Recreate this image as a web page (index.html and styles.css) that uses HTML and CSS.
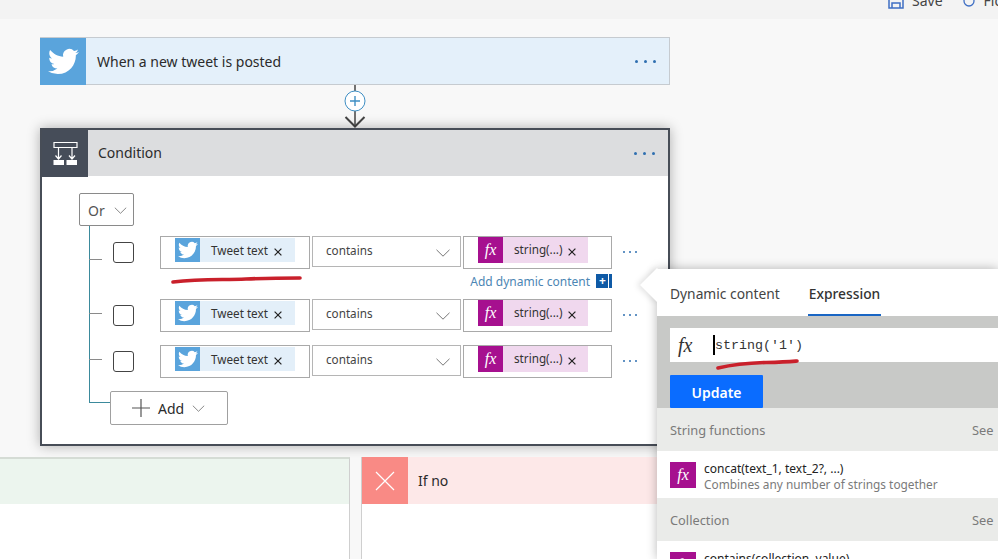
FILE: index.html
```html
<!DOCTYPE html>
<html lang="en">
<head>
<meta charset="UTF-8" />
<meta name="viewport" content="width=device-width, initial-scale=1.0"/>
<title>Flow designer</title>
<link rel="stylesheet" href="styles.css">
</head>
<body>

<svg class="defs" width="0" height="0">
  <symbol id="bird" viewBox="0 0 24 24">
    <path fill="#fff" d="M23.953 4.57a10 10 0 01-2.825.775 4.958 4.958 0 002.163-2.723c-.951.555-2.005.959-3.127 1.184a4.92 4.92 0 00-8.384 4.482C7.69 8.095 4.067 6.13 1.64 3.162a4.822 4.822 0 00-.666 2.475c0 1.71.87 3.213 2.188 4.096a4.904 4.904 0 01-2.228-.616v.06a4.923 4.923 0 003.946 4.827 4.996 4.996 0 01-2.212.085 4.936 4.936 0 004.604 3.417 9.867 9.867 0 01-6.102 2.105c-.39 0-.779-.023-1.17-.067a13.995 13.995 0 007.557 2.209c9.053 0 13.998-7.496 13.998-13.985 0-.21 0-.42-.015-.63A9.935 9.935 0 0024 4.59z"/>
  </symbol>
  <symbol id="chevron" viewBox="0 0 14 8">
    <path fill="none" stroke="currentColor" d="M.5.8 7 7.2 13.5.8"/>
  </symbol>
  <symbol id="close" viewBox="0 0 8 8">
    <path fill="none" stroke="#222" stroke-width="1.2" d="M.6.6l6.8 6.8M7.4.6L.6 7.4"/>
  </symbol>
</svg>

<div id="topbar">
  <svg class="saveIcon" width="16" height="16" viewBox="0 0 16 16"><path fill="none" stroke="#3f6fc4" stroke-width="1.5" d="M1 1h14v14H1zM4 15v-5h8v5"/></svg>
  <span class="barLabel">Save</span>
  <svg class="flowIcon" width="12" height="16" viewBox="0 0 12 16"><circle cx="6" cy="8" r="5" fill="none" stroke="#3f6fc4" stroke-width="1.3"/></svg>
  <span class="barLabel">Flow</span>
</div>

<div id="designer">
  <div class="card tweetCard">
    <div class="cardIcon twitter"><svg width="31" height="31"><use href="#bird"/></svg></div>
    <div class="cardTitle">When a new tweet is posted</div>
    <div class="dots big"><i></i><i></i><i></i></div>
  </div>

  <svg class="connector" width="24" height="43" viewBox="0 0 24 43">
    <path fill="none" stroke="#444" stroke-width="1.5" d="M12 0v6M12 26v15"/>
    <path fill="none" stroke="#444" stroke-width="2" d="M2.5 32l9.5 9.5L21.5 32"/>
    <circle cx="12" cy="16" r="10" fill="#fff" stroke="#3f8fc4"/>
    <path fill="none" stroke="#3f8fc4" stroke-width="1.4" d="M12 11v10M7 16h10"/>
  </svg>

  <div class="conditionCard">
    <div class="conditionHead">
      <div class="cardIcon condition">
        <svg width="26" height="26" viewBox="0 0 26 26">
          <path fill="none" stroke="#fff" stroke-width="1.2" d="M2 2.500h23v5H2zM6.500 8v11M20 8v11M3.500 15.500l3 3.500 3-3.500M17 15.500l3 3.500 3-3.500"/>
          <path fill="#fff" d="M1.500 20h10.500v5H1.500zM14.500 20h10.500v5H14.500z"/>
        </svg>
      </div>
      <div class="cardTitle">Condition</div>
      <div class="dots big"><i></i><i></i><i></i></div>
    </div>

    <div class="conditionBody">
      <div class="orButton">Or <svg class="chev" width="13" height="7"><use href="#chevron"/></svg></div>

      <div class="rows">
        <div class="row first">
          <input class="check" type="checkbox">
          <div class="field"><span class="chip tw"><span class="chipIcon tw"><svg width="20" height="20"><use href="#bird"/></svg></span><span class="chipText">Tweet text</span><svg class="x" width="8" height="8"><use href="#close"/></svg></span></div>
          <div class="select">contains <svg class="chev" width="14" height="8"><use href="#chevron"/></svg></div>
          <div class="field"><span class="chip fn"><span class="chipIcon fn">fx</span><span class="chipText">string(...)</span><svg class="x" width="8" height="8"><use href="#close"/></svg></span></div>
          <div class="dots"><i></i><i></i><i></i></div>
        </div>
        <div class="hint">
          <span>Add dynamic content</span>
          <span class="hintIcon">+</span>
        </div>
        <div class="row">
          <input class="check" type="checkbox">
          <div class="field"><span class="chip tw"><span class="chipIcon tw"><svg width="20" height="20"><use href="#bird"/></svg></span><span class="chipText">Tweet text</span><svg class="x" width="8" height="8"><use href="#close"/></svg></span></div>
          <div class="select">contains <svg class="chev" width="14" height="8"><use href="#chevron"/></svg></div>
          <div class="field"><span class="chip fn"><span class="chipIcon fn">fx</span><span class="chipText">string(...)</span><svg class="x" width="8" height="8"><use href="#close"/></svg></span></div>
          <div class="dots"><i></i><i></i><i></i></div>
        </div>
        <div class="row third">
          <input class="check" type="checkbox">
          <div class="field"><span class="chip tw"><span class="chipIcon tw"><svg width="20" height="20"><use href="#bird"/></svg></span><span class="chipText">Tweet text</span><svg class="x" width="8" height="8"><use href="#close"/></svg></span></div>
          <div class="select">contains <svg class="chev" width="14" height="8"><use href="#chevron"/></svg></div>
          <div class="field"><span class="chip fn"><span class="chipIcon fn">fx</span><span class="chipText">string(...)</span><svg class="x" width="8" height="8"><use href="#close"/></svg></span></div>
          <div class="dots"><i></i><i></i><i></i></div>
        </div>
        <div class="addButton">
          <svg width="18" height="18" viewBox="0 0 18 18"><path fill="none" stroke="#555" stroke-width="1.2" d="M9 0v18M0 9h18"/></svg>
          <span>Add</span>
          <svg class="chev" width="13" height="7"><use href="#chevron"/></svg>
        </div>
      </div>
    </div>
  </div>
</div>

<div id="branches">
  <div class="branch yes"><div class="branchHead"></div></div>
  <div class="branch no">
    <div class="branchHead">
      <div class="cardIcon noIcon">
        <svg width="20" height="20" viewBox="0 0 20 20"><path fill="none" stroke="#fff" stroke-width="1.2" d="M1 1l18 18M19 1L1 19"/></svg>
      </div>
      <div class="branchTitle">If no</div>
    </div>
  </div>
</div>

<!-- red pen marks drawn over the page -->
<svg class="pen penToken" width="132" height="8" viewBox="0 0 132 8"><path fill="none" stroke="#c9202b" stroke-width="3.6" stroke-linecap="round" d="M2 6C30 3 50 4 75 3s40-1 54-1"/></svg>

<div id="exprPanel">
  <div class="panelArrow"></div>
  <div class="tabs">
    <span class="tab">Dynamic content</span>
    <span class="tab active">Expression</span>
  </div>
  <div class="exprArea">
    <div class="exprInput">
      <span class="fxMark">fx</span>
      <span class="exprText">string('1')</span>
    </div>
    <button class="updateBtn">Update</button>
  </div>
  <div class="section"><span>String functions</span><span>See</span></div>
  <div class="fnItem">
    <span class="fnIcon">fx</span>
    <div>
      <div class="fnName">concat(text_1, text_2?, ...)</div>
      <div class="fnDesc">Combines any number of strings together</div>
    </div>
  </div>
  <div class="section"><span>Collection</span><span>See</span></div>
  <div class="fnItem lastItem">
    <span class="fnIcon">fx</span>
    <div>
      <div class="fnName">contains(collection, value)</div>
    </div>
  </div>
  <svg class="pen penExpr" width="84" height="11" viewBox="0 0 84 11"><path fill="none" stroke="#c9202b" stroke-width="3.6" stroke-linecap="round" d="M2 9C15 6 30 4 50 3.500s25-1 31-1.500"/></svg>
</div>

</body>
</html>
```

FILE: styles.css
```css
html, body {
  height: 100%;
}
body {
  font-family: "Noto Sans", "Open Sans", sans-serif;
  background-color: #f8f8f8;
  color: #2b2b2b;
  margin: 0;
  width: 998px;
  height: 559px;
  overflow: hidden;
  position: relative;
}
.defs {
  display: block;
  height: 0;
}

/* command bar, cut off by the window top */
#topbar {
  height: 19px;
  background-color: #f3f3f3;
  display: flex;
  align-items: flex-end;
  padding: 0 0 8px 888px;
  box-sizing: border-box;
  overflow: hidden;
  white-space: nowrap;
}
.barLabel {
  font-size: 14px;
  line-height: 20px;
  color: #444;
  flex: none;
}
.saveIcon {
  flex: none;
  margin-right: 8px;
  margin-bottom: 2px;
}
.flowIcon {
  flex: none;
  margin: 0 9px 2px 20px;
}

#designer {
  width: 630px;
  margin: 18px 0 0 40px;
  display: flex;
  flex-direction: column;
}
.card {
  display: flex;
  align-items: center;
  height: 48px;
  box-sizing: border-box;
  background-color: #e4f0fa;
  border: 1px solid #c6cbd0;
  border-left: 0;
}
.cardIcon {
  flex: none;
  display: flex;
  align-items: center;
  justify-content: center;
  width: 46px;
  height: 47px;
}
.cardIcon.twitter {
  background-color: #5aa4dc;
}
.cardIcon.condition {
  background-color: #464d59;
}
.cardTitle {
  flex: 1;
  padding-left: 11px;
  font-size: 14px;
}
.conditionHead .cardTitle {
  padding-left: 10px;
  line-height: 18px;
  margin-bottom: 1px;
}
.connector {
  align-self: center;
  display: block;
}

.dots {
  display: flex;
  gap: 4px;
}
.dots i {
  width: 2px;
  height: 2px;
  border-radius: 50%;
  background-color: #2f6fb0;
}
.dots.big {
  gap: 6px;
  margin-right: 13px;
}
.dots.big i {
  width: 3px;
  height: 3px;
}

.conditionCard {
  height: 318px;
  box-sizing: border-box;
  background-color: #fff;
  border: 2px solid #474d57;
  box-shadow: 0 0 12px rgba(0, 0, 0, 0.3);
}
.conditionHead {
  display: flex;
  align-items: center;
  height: 46px;
  background-color: #dcdddf;
}
.conditionBody {
  padding: 17px 0 0 37px;
}
.orButton {
  width: 55px;
  height: 33px;
  box-sizing: border-box;
  display: flex;
  align-items: center;
  gap: 9px;
  padding: 1px 0 0 8px;
  font-size: 14px;
  color: #555;
  border: 1px solid #8a8a8a;
  border-radius: 2px;
}
.chev {
  flex: none;
  color: #777;
}

/* tree rail on the left of the rows */
.rows {
  position: relative;
  margin-left: 10px;
  padding-top: 9px;
}
.rows::before {
  content: "";
  position: absolute;
  left: 0;
  top: 0;
  bottom: 22px;
  width: 1px;
  background-color: #3b8a9c;
}
.rows::after {
  content: "";
  position: absolute;
  left: 0;
  bottom: 22px;
  width: 21px;
  height: 1px;
  background-color: #3b8a9c;
}
.row {
  position: relative;
  display: flex;
  align-items: flex-start;
  height: 34px;
  padding-left: 24px;
}
.row::before {
  content: "";
  position: absolute;
  left: 0;
  top: 15px;
  width: 13px;
  height: 1px;
  background-color: #8a8a8a;
}
.row.first::before {
  top: 24px;
}
.row.third {
  margin-top: 12px;
}
.check {
  appearance: none;
  flex: none;
  width: 21px;
  height: 21px;
  margin: 7px 26px 0 0;
  box-sizing: border-box;
  background-color: #fff;
  border: 1px solid #444;
  border-radius: 3px;
}
.field {
  flex: none;
  display: flex;
  align-items: flex-start;
  width: 150px;
  height: 33px;
  margin-top: 1px;
  box-sizing: border-box;
  padding: 1px 0 0 14px;
  border: 1px solid #a9a9a9;
}
.field + .select + .field {
  width: 149px;
  padding-top: 0;
}
.select {
  flex: none;
  width: 149px;
  height: 31px;
  margin: 1px 2px 0;
  box-sizing: border-box;
  padding: 0 10px 3px 13px;
  display: flex;
  align-items: center;
  justify-content: space-between;
  font-size: 11.7px;
  color: #444;
  border: 1px solid #b5b5b5;
}
.select .chev {
  margin-top: 6px;
}
.chip {
  display: inline-flex;
  align-items: center;
  width: 120px;
  height: 24px;
  font-size: 11.7px;
}
.chip.tw {
  background-color: #e3eff9;
}
.chip.fn {
  width: 110px;
  height: 26px;
  background-color: #f0d8ee;
}
.chipIcon {
  flex: none;
  align-self: stretch;
  width: 25px;
  margin-right: 11px;
  display: flex;
  align-items: center;
  justify-content: center;
}
.chipIcon.tw {
  background-color: #5aa4dc;
}
.chipIcon.fn, .fnIcon {
  background-color: #a6108f;
  color: #fff;
  font-family: "Liberation Serif", serif;
  font-style: italic;
  font-size: 16px;
}
.chipText {
  flex: none;
  line-height: 20px;
  margin-bottom: 1px;
  color: #333;
}
.chip.fn .chipText {
  margin-bottom: 3px;
}
.x {
  flex: none;
  margin: 3px 0 0 6px;
}
.row > .dots {
  margin: 16px 0 0 11px;
}
.hint {
  display: flex;
  justify-content: flex-end;
  align-items: center;
  gap: 6px;
  width: 523px;
  height: 29px;
  box-sizing: border-box;
  padding-bottom: 5px;
  font-size: 12px;
  color: #4c86b4;
}
.hintIcon {
  width: 13px;
  height: 14px;
  line-height: 13px;
  text-align: center;
  color: #fff;
  font-weight: bold;
  background-color: #0f5aa6;
  border-right: 3px solid #0f5aa6;
  box-shadow: inset -1px 0 0 #fff;
}
.addButton {
  width: 118px;
  height: 34px;
  box-sizing: border-box;
  margin: 13px 0 0 21px;
  display: flex;
  align-items: center;
  padding-left: 21px;
  gap: 8px;
  position: relative;
  font-size: 14px;
  background-color: #fff;
  border: 1px solid #a0a0a0;
  border-radius: 2px;
}

#branches {
  display: flex;
  gap: 11px;
  margin-top: 11px;
  height: 102px;
}
.branch {
  box-sizing: border-box;
  background-color: #fff;
}
.branch.yes {
  flex: none;
  width: 350px;
  border-top: 2px solid #d5dcd5;
  border-right: 1px solid #cfcfcf;
}
.branch.no {
  flex: 1;
  border-left: 1px solid #cfcfcf;
}
.branchHead {
  display: flex;
  align-items: center;
  height: 47px;
}
.yes .branchHead {
  height: 45px;
  background-color: #ecf5ee;
}
.no .branchHead {
  background-color: #fde8e8;
}
.noIcon {
  background-color: #f98a85;
}
.branchTitle {
  padding-left: 10px;
  font-size: 14px;
}

.pen {
  position: absolute;
}
.penToken {
  left: 171px;
  top: 276px;
}
.penExpr {
  left: 59px;
  top: 90px;
}

/* expression editor flyout */
#exprPanel {
  position: absolute;
  left: 657px;
  top: 269px;
  right: 0;
  bottom: 0;
  background-color: #fff;
  box-shadow: 0 0 10px rgba(0, 0, 0, 0.28);
}
.panelArrow {
  position: absolute;
  left: -12px;
  top: 4px;
  width: 24px;
  height: 24px;
  background-color: #fff;
  transform: rotate(45deg);
  box-shadow: -2px 2px 6px rgba(0, 0, 0, 0.12);
}
.tabs {
  position: relative;
  display: flex;
  gap: 28px;
  height: 47px;
  box-sizing: border-box;
  padding-left: 13px;
  font-size: 13.8px;
  color: #444;
  background-color: #fff;
}
.tab {
  line-height: 49px;
  height: 47px;
  box-sizing: border-box;
}
.tab.active {
  padding: 0 1px;
  color: #333;
  font-weight: 500;
  border-bottom: 2px solid #1a66c4;
}
.exprArea {
  position: relative;
  height: 92px;
  box-sizing: border-box;
  padding: 12px 0 0 13px;
  background-color: #c8c9c7;
}
.exprInput {
  display: flex;
  align-items: center;
  height: 34px;
  background-color: #fff;
}
.fxMark {
  width: 44px;
  padding-left: 8px;
  box-sizing: border-box;
  font-family: "Liberation Serif", serif;
  font-style: italic;
  font-size: 20px;
  color: #333;
}
.exprText {
  font-family: "Liberation Mono", monospace;
  font-size: 13.33px;
  color: #333;
  box-shadow: -1px 0 0 #000;
  border-left: 1px solid #000;
  line-height: 19px;
  padding-top: 1px;
}
.updateBtn {
  display: block;
  width: 93px;
  height: 33px;
  margin-top: 13px;
  padding: 2px 0 0;
  font-family: inherit;
  font-size: 14px;
  font-weight: 600;
  color: #fff;
  background-color: #0a6cff;
  border: 0;
  border-radius: 1px;
}
.section {
  display: grid;
  grid-template-columns: 302px auto;
  align-items: center;
  height: 43px;
  box-sizing: border-box;
  padding-left: 13px;
  font-size: 12.8px;
  color: #7a7a7a;
  background-color: #eaebe9;
  white-space: nowrap;
  overflow: hidden;
}
.fnItem {
  display: flex;
  align-items: flex-start;
  gap: 8px;
  height: 47px;
  padding: 10px 0 0 13px;
  box-sizing: border-box;
  background-color: #fff;
  overflow: hidden;
}
.lastItem {
  height: 18px;
}
.fnIcon {
  flex: none;
  width: 26px;
  height: 26px;
  margin-top: 1px;
  line-height: 26px;
  text-align: center;
}
.fnName {
  font-size: 12px;
  line-height: 15px;
  color: #222;
}
.fnDesc {
  font-size: 11.85px;
  line-height: 16px;
  color: #7a7a7a;
}
```
